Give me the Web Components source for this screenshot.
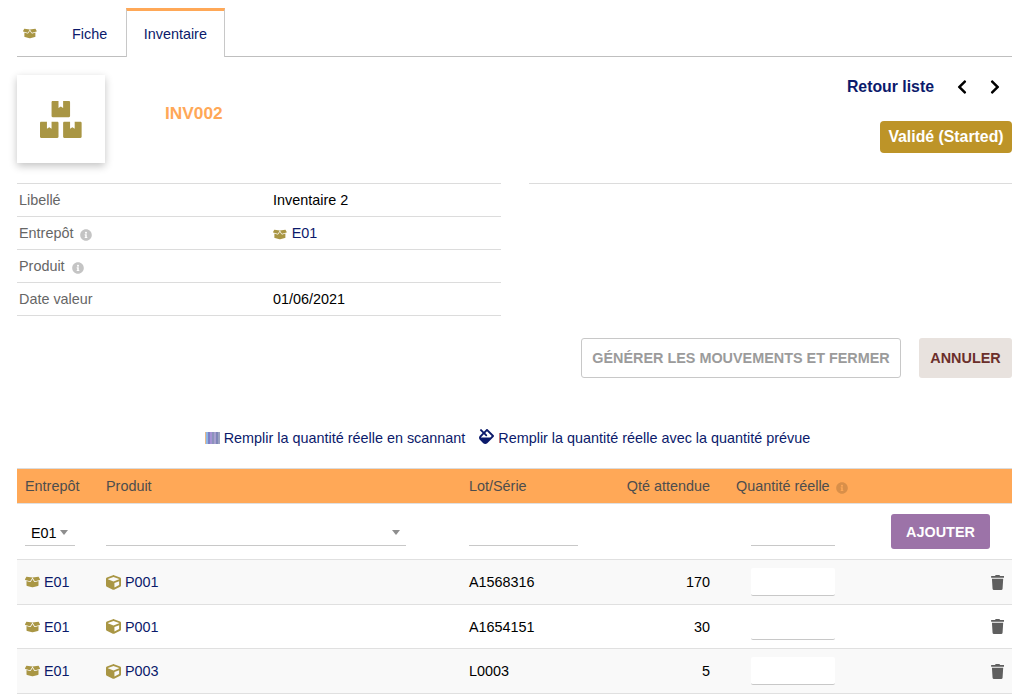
<!DOCTYPE html>
<html lang="fr">
<head>
<meta charset="utf-8">
<title>INV002</title>
<style>
	html, body { margin: 0; padding: 0; background: #fff; }
	body { font: 14.4px/20px "Liberation Sans", Arial, sans-serif; color: #000; overflow: hidden; }
</style>
</head>
<body>
<inv-page></inv-page>

<script>
const ICONS = {
	boxopen: ['0 0 640 512', 'M425.7 256c-16.9 0-32.8-9-41.4-23.4L320 126l-64.2 106.6c-8.7 14.5-24.6 23.5-41.5 23.5-4.5 0-9-.6-13.3-1.9L64 215v178c0 14.7 10 27.5 24.2 31l216.2 54.1c10.2 2.5 20.9 2.5 31 0L551.8 424c14.2-3.6 24.2-16.4 24.2-31V215l-137 39.1c-4.3 1.3-8.8 1.9-13.3 1.9zm212.6-112.2L586.8 41c-3.1-6.2-9.8-9.8-16.7-8.9L320 64l91.7 152.1c3.8 6.3 11.4 9.3 18.5 7.3l197.9-56.5c9.9-2.9 14.7-13.9 10.2-23.1zM53.2 41L1.7 143.8c-4.6 9.2.3 20.2 10.1 23l197.9 56.5c7.1 2 14.7-1 18.5-7.3L320 64 69.8 32.1c-6.9-.8-13.5 2.7-16.6 8.9z'],
	boxes: ['0 0 576 512', 'M560 288h-80v96l-32-21.3-32 21.3v-96h-80c-8.8 0-16 7.2-16 16v192c0 8.8 7.2 16 16 16h224c8.8 0 16-7.2 16-16V304c0-8.8-7.2-16-16-16zm-384-64h224c8.8 0 16-7.2 16-16V16c0-8.8-7.2-16-16-16h-80v96l-32-21.3L256 96V0h-80c-8.8 0-16 7.2-16 16v192c0 8.8 7.2 16 16 16zm64 64h-80v96l-32-21.3L96 384v-96H16c-8.8 0-16 7.2-16 16v192c0 8.8 7.2 16 16 16h224c8.8 0 16-7.2 16-16V304c0-8.8-7.2-16-16-16z'],
	cube: ['0 0 512 512', 'M239.1 6.3l-208 78c-18.7 7-31.1 25-31.1 45v225.1c0 18.2 10.3 34.8 26.5 42.9l208 104c13.5 6.8 29.4 6.8 42.9 0l208-104c16.3-8.1 26.5-24.8 26.5-42.9V129.3c0-20-12.4-37.9-31.1-44.9l-208-78C262 2.2 250 2.2 239.1 6.3zM256 68.4l192 72v1.1l-192 78-192-78v-1.1l192-72zm32 356V275.5l160-65v133.9l-160 80z'],
	info: ['0 0 512 512', 'M256 8C119 8 8 119.1 8 256c0 137 111 248 248 248s248-111 248-248C504 119.1 393 8 256 8zm0 110c23.2 0 42 18.8 42 42s-18.8 42-42 42-42-18.8-42-42 18.8-42 42-42zm56 254c0 6.6-5.4 12-12 12h-88c-6.6 0-12-5.4-12-12v-24c0-6.6 5.4-12 12-12h12v-64h-12c-6.6 0-12-5.4-12-12v-24c0-6.6 5.4-12 12-12h64c6.6 0 12 5.4 12 12v100h12c6.6 0 12 5.4 12 12v24z'],
	trash: ['0 0 448 512', 'M432 32H312l-9.4-18.7A24 24 0 0 0 281.1 0H166.8a23.72 23.72 0 0 0-21.4 13.3L136 32H16A16 16 0 0 0 0 48v32a16 16 0 0 0 16 16h416a16 16 0 0 0 16-16V48a16 16 0 0 0-16-16zM53.2 467a48 48 0 0 0 47.9 45h245.8a48 48 0 0 0 47.9-45L416 128H32z'],
	left: ['0 0 320 512', 'M34.52 239.03L228.87 44.69c9.37-9.37 24.57-9.37 33.94 0l22.67 22.67c9.36 9.36 9.37 24.52.04 33.9L131.49 256l154.02 154.75c9.34 9.38 9.32 24.54-.04 33.9l-22.67 22.67c-9.37 9.37-24.57 9.37-33.94 0L34.52 272.97c-9.37-9.37-9.37-24.57 0-33.94z'],
	right: ['0 0 320 512', 'M285.476 272.971L91.132 467.314c-9.373 9.373-24.569 9.373-33.941 0l-22.667-22.667c-9.357-9.357-9.375-24.522-.04-33.901L188.505 256 34.484 101.255c-9.335-9.379-9.317-24.544.04-33.901l22.667-22.667c9.373-9.373 24.569-9.373 33.941 0L285.475 239.03c9.373 9.372 9.373 24.568.001 33.941z'],
	fill: ['0 0 512 512', 'M502.63 217.06L294.94 9.37C288.69 3.12 280.5 0 272.31 0s-16.38 3.12-22.62 9.37l-81.58 81.58L81.93 4.76c-6.25-6.25-16.38-6.25-22.62 0L36.69 27.38c-6.24 6.25-6.24 16.38 0 22.62l86.19 86.18-94.76 94.76c-37.49 37.48-37.49 98.26 0 135.75l117.19 117.19c18.74 18.74 43.31 28.12 67.87 28.12 24.57 0 49.13-9.37 67.87-28.12l221.57-221.57c12.5-12.5 12.5-32.75.01-45.25zm-116.22 70.97H65.93c1.36-3.84 3.57-7.98 7.43-11.83l13.15-13.15 81.61-81.61 58.6 58.6c12.49 12.49 32.75 12.49 45.24 0s12.49-32.75 0-45.24l-58.6-58.6 58.95-58.95 162.44 162.44-48.34 48.34z']
};

class InvIcon extends HTMLElement {
	connectedCallback() {
		const [box, d] = ICONS[this.getAttribute('name')];
		const size = this.getAttribute('size') || 14;
		const color = this.getAttribute('color') || '#a99644';
		this.attachShadow({ mode: 'open' }).innerHTML = `
			<style>
				:host { display: inline-flex; align-items: center; vertical-align: middle; }
				svg { height: ${size}px; width: auto; display: block; }
			</style>
			<svg viewBox="${box}" fill="${color}"><path d="${d}"/></svg>`;
	}
}
customElements.define('inv-icon', InvIcon);

class InvTabs extends HTMLElement {
	constructor() {
		super();
		this.attachShadow({ mode: 'open' }).innerHTML = `
			<style>
				:host { display: flex; height: 48px; margin-top: 8px; border-bottom: 1px solid #bfbfbf; align-items: stretch; color: #0b1a6b; }
				.tab { display: flex; align-items: center; padding: 3px 18px 0; }
				.tab.fiche { padding-right: 19px; }
				.home { padding: 3px 0 0 6px; width: 31px; box-sizing: content-box; }
				.active { padding: 0 17px 0 16.5px; border: 1px solid #c8c8c8; border-top: 3px solid #ffa857; border-bottom: 0; background: #fff; margin-bottom: -1px; }
			</style>
			<div class="tab home"><inv-icon name="boxopen" size="11"></inv-icon></div>
			<div class="tab fiche">Fiche</div>
			<div class="tab active">Inventaire</div>`;
	}
}
customElements.define('inv-tabs', InvTabs);

class InvHeader extends HTMLElement {
	constructor() {
		super();
		this.attachShadow({ mode: 'open' }).innerHTML = `
			<style>
				:host { display: flex; justify-content: space-between; align-items: flex-start; padding-top: 18px; height: 108px; box-sizing: content-box; }
				.left { display: flex; align-items: center; }
				.logo { width: 88px; height: 88px; display: flex; align-items: center; justify-content: center; background: #fff; box-shadow: 0 3px 8px rgba(0,0,0,.24); }
				.ref { margin: -12px 0 0 60px; font-size: 17.28px; font-weight: 700; color: #ffa857; }
				.right { display: flex; flex-direction: column; align-items: flex-end; }
				.nav { display: flex; align-items: center; height: 24px; margin-bottom: 22px; padding-right: 11.5px; font-size: 15.84px; font-weight: 700; color: #0b1a6b; }
				.nav inv-icon { width: 11px; justify-content: center; margin-left: 22px; }
				.nav inv-icon + inv-icon { margin-left: 22.5px; }
				.state { height: 32px; width: 132px; box-sizing: border-box; background: #bd9428; color: #fff; border-radius: 4px; font-size: 15.84px; font-weight: 700; display: flex; align-items: center; justify-content: center; }
			</style>
			<div class="left">
				<div class="logo"><inv-icon name="boxes" size="37"></inv-icon></div>
				<div class="ref">INV002</div>
			</div>
			<div class="right">
				<div class="nav">Retour liste
					<inv-icon name="left" size="16" color="#000"></inv-icon>
					<inv-icon name="right" size="16" color="#000"></inv-icon>
				</div>
				<div class="state">Validé (Started)</div>
			</div>`;
	}
}
customElements.define('inv-header', InvHeader);

class InvField extends HTMLElement {
	constructor() {
		super();
		const info = this.hasAttribute('info') ? '<inv-icon class="i" name="info" size="12" color="#c4c4c4"></inv-icon>' : '';
		this.attachShadow({ mode: 'open' }).innerHTML = `
			<style>
				:host { display: grid; grid-template-columns: 256px 1fr; height: 32px; align-items: center; border-bottom: 1px solid #dcdcdc; }
				.label { padding-left: 2px; color: #666; }
				.i { margin-left: 3px; position: relative; top: 1px; }
			</style>
			<div class="label">${this.getAttribute('label')} ${info}</div>
			<div><slot></slot></div>`;
	}
}
customElements.define('inv-field', InvField);

class InvFields extends HTMLElement {
	constructor() {
		super();
		this.attachShadow({ mode: 'open' }).innerHTML = `
			<style>
				:host { display: grid; grid-template-columns: 484px 483px; justify-content: space-between; }
				.col { border-top: 1px solid #dcdcdc; }
			</style>
			<div class="col"><slot></slot></div>
			<div class="col"></div>`;
	}
}
customElements.define('inv-fields', InvFields);

class InvActions extends HTMLElement {
	constructor() {
		super();
		this.attachShadow({ mode: 'open' }).innerHTML = `
			<style>
				:host { display: flex; justify-content: flex-end; gap: 18px; margin-top: 22px; }
				div { height: 40px; box-sizing: border-box; border-radius: 3px; display: flex; align-items: center; justify-content: center; font-weight: 700; font-size: 14.4px; }
				.gen { width: 320px; border: 1px solid #c8c8c8; color: #9b9b9b; }
				.cancel { width: 93px; background: #e8e2de; color: #6b2f2b; }
			</style>
			<div class="gen">GÉNÉRER LES MOUVEMENTS ET FERMER</div>
			<div class="cancel">ANNULER</div>`;
	}
}
customElements.define('inv-actions', InvActions);

class InvShortcuts extends HTMLElement {
	constructor() {
		super();
		this.attachShadow({ mode: 'open' }).innerHTML = `
			<style>
				:host { display: flex; justify-content: center; align-items: center; height: 20px; margin-top: 50px; padding-right: 14px; color: #0b1a6b; }
				.bars { width: 15px; height: 12px; margin-right: 4px; background: linear-gradient(90deg, #e8b888 0 1px, #8fb6e4 1px 3px, #7f7fc4 3px 5px, #a593d4 5px 7px, #8c93bc 7px 9px, #a8a0d0 9px 11px, #7f86b8 11px 13px, #9aa2c0 13px 15px); }
				inv-icon { margin: -3px 4px 0 14px; }
			</style>
			<span class="bars"></span>Remplir la quantité réelle en scannant
			<inv-icon name="fill" size="15" color="#0b1a6b"></inv-icon>Remplir la quantité réelle avec la quantité prévue`;
	}
}
customElements.define('inv-shortcuts', InvShortcuts);

const GRID = `display: grid; grid-template-columns: 81px 363px 146px 111px 1fr; align-items: center;`;

class InvTableHead extends HTMLElement {
	constructor() {
		super();
		this.attachShadow({ mode: 'open' }).innerHTML = `
			<style>
				:host { ${GRID} height: 34px; margin-top: 20px; background: #ffa857; border-top: 1px solid #dcdcdc; border-bottom: 1px solid #e0e0e0; color: #4d4d4d; }
				div { padding-left: 8px; }
				.num { text-align: right; padding: 0 8px 0 0; }
				.qty { padding-left: 18px; }
				inv-icon { margin-left: 2px; position: relative; top: 1px; }
			</style>
			<div>Entrepôt</div><div>Produit</div><div>Lot/Série</div><div class="num">Qté attendue</div>
			<div class="qty">Quantité réelle <inv-icon name="info" size="12" color="#d98f49"></inv-icon></div>`;
	}
}
customElements.define('inv-table-head', InvTableHead);

class InvFilterRow extends HTMLElement {
	constructor() {
		super();
		this.attachShadow({ mode: 'open' }).innerHTML = `
			<style>
				:host { ${GRID} height: 55px; border-bottom: 1px solid #e0e0e0; }
				.cell { padding-left: 8px; display: flex; }
				.inp { height: 25px; margin-top: 3px; box-sizing: border-box; border-bottom: 1px solid #c8c8c8; display: flex; align-items: center; justify-content: space-between; }
				.caret { width: 0; height: 0; border: 4.5px solid transparent; border-top: 5px solid #8e8e8e; border-bottom: 0; }
				.wh { width: 50px; padding-left: 6px; justify-content: flex-start; gap: 3px; }
				.prod { width: 300px; padding-right: 6px; justify-content: flex-end; }
				.lot { width: 109px; }
				.last { display: flex; align-items: center; }
				.qty { width: 84px; margin-left: 33px; }
				.add { width: 99px; height: 35px; margin-left: 56px; border-radius: 3px; background: #9c73a8; color: #fff; font-weight: 700; display: flex; align-items: center; justify-content: center; }
			</style>
			<div class="cell"><div class="inp wh">E01<span class="caret"></span></div></div>
			<div class="cell"><div class="inp prod"><span class="caret"></span></div></div>
			<div class="cell"><div class="inp lot"></div></div>
			<div></div>
			<div class="last"><div class="inp qty"></div><div class="add">AJOUTER</div></div>`;
	}
}
customElements.define('inv-filter-row', InvFilterRow);

class InvLine extends HTMLElement {
	constructor() {
		super();
		const a = n => this.getAttribute(n);
		this.attachShadow({ mode: 'open' }).innerHTML = `
			<style>
				:host { ${GRID} height: ${a('h') || 44}px; border-bottom: 1px solid #e0e0e0; }
				:host([shade]) { background: #f9f9f9; }
				div { padding-left: 8px; }
				.link { color: #0b1a6b; }
				.link inv-icon { position: relative; top: -1px; }
				.num { text-align: right; padding: 0 8px 0 0; }
				.last { display: flex; align-items: center; justify-content: space-between; padding: 0 8px 0 33px; height: 100%; box-sizing: border-box; }
				.qty { width: 84px; height: 28px; padding: 0; box-sizing: border-box; border-bottom: 1px solid #c8c8c8; background: #fff; border-radius: 2px; }
				:host([h]) .qty { margin-bottom: 1px; }
			</style>
			<div class="link"><inv-icon name="boxopen" size="12"></inv-icon> ${a('wh')}</div>
			<div class="link"><inv-icon name="cube" size="15"></inv-icon> ${a('prod')}</div>
			<div>${a('lot')}</div>
			<div class="num">${a('qte')}</div>
			<div class="last"><div class="qty"></div><inv-icon name="trash" size="15" color="#5f5f5f"></inv-icon></div>`;
	}
}
customElements.define('inv-line', InvLine);

class InvPage extends HTMLElement {
	constructor() {
		super();
		this.attachShadow({ mode: 'open' }).innerHTML = `
			<style>
				:host { display: block; padding: 0 18px 0 17px; width: 1030px; height: 698px; box-sizing: border-box; overflow: hidden; }
				.link { color: #0b1a6b; }
				.gap { margin-right: 1px; }
			</style>
			<inv-tabs></inv-tabs>
			<inv-header></inv-header>
			<inv-fields>
				<inv-field label="Libellé">Inventaire 2</inv-field>
				<inv-field label="Entrepôt" info><inv-icon class="gap" name="boxopen" size="11"></inv-icon> <span class="link">E01</span></inv-field>
				<inv-field label="Produit" info></inv-field>
				<inv-field label="Date valeur">01/06/2021</inv-field>
			</inv-fields>
			<inv-actions></inv-actions>
			<inv-shortcuts></inv-shortcuts>
			<inv-table-head></inv-table-head>
			<inv-filter-row></inv-filter-row>
			<inv-line shade wh="E01" prod="P001" lot="A1568316" qte="170"></inv-line>
			<inv-line wh="E01" prod="P001" lot="A1654151" qte="30" h="43"></inv-line>
			<inv-line shade wh="E01" prod="P003" lot="L0003" qte="5"></inv-line>`;
	}
}
customElements.define('inv-page', InvPage);
</script>
</body>
</html>
